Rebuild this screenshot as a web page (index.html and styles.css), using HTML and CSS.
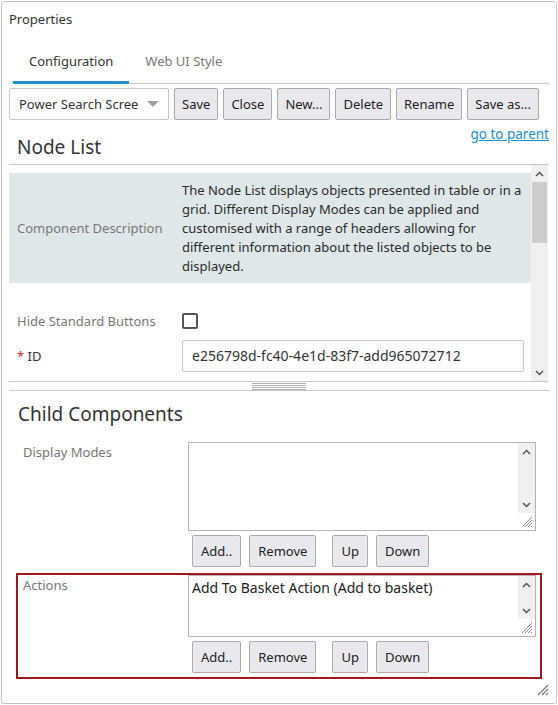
FILE: index.html
```html
<!DOCTYPE html>
<html>
<head>
<meta charset="utf-8">
<link rel="stylesheet" href="styles.css">
</head>
<body>
<div class="panel">
  <div class="panel-title">Properties</div>
  <div class="tabs">
    <div class="tab active">Configuration</div>
    <div class="tab">Web UI Style</div>
  </div>
  <div class="toolbar">
    <div class="select"><span class="select-text">Power Search Scree</span><span class="caret"></span></div>
    <button class="btn">Save</button>
    <button class="btn">Close</button>
    <button class="btn">New...</button>
    <button class="btn">Delete</button>
    <button class="btn">Rename</button>
    <button class="btn">Save as...</button>
  </div>
  <div class="node-head">
    <h2 class="heading">Node List</h2>
    <a class="parent-link" href="#">go to parent</a>
  </div>
  <div class="scroll-area">
    <div class="scroll-content">
      <div class="desc-row">
        <div class="desc-label">Component Description</div>
        <div class="desc-text">The Node List displays objects presented in table or in a grid. Different Display Modes can be applied and customised with a range of headers allowing for different information about the listed objects to be displayed.</div>
      </div>
      <div class="field-row hide-row">
        <div class="field-label">Hide Standard Buttons</div>
        <div class="checkbox"></div>
      </div>
      <div class="field-row id-row">
        <div class="field-label dark"><span class="req">*</span> ID</div>
        <div class="input">e256798d-fc40-4e1d-83f7-add965072712</div>
      </div>
    </div>
    <div class="vscroll">
      <div class="arrow up"><svg width="9" height="6" viewBox="0 0 9 6"><polyline points="1,5 4.5,1.5 8,5" fill="none" stroke="#505050" stroke-width="1.4"/></svg></div>
      <div class="thumb"></div>
      <div class="track"></div>
      <div class="arrow down"><svg width="9" height="6" viewBox="0 0 9 6"><polyline points="1,1 4.5,4.5 8,1" fill="none" stroke="#505050" stroke-width="1.4"/></svg></div>
    </div>
  </div>
  <div class="splitter"><div class="grip"></div></div>
  <h2 class="heading child-heading">Child Components</h2>
  <div class="child-row">
    <div class="child-label">Display Modes</div>
    <div class="child-body">
      <div class="listbox tall">
        <div class="list-text"></div>
        <div class="list-scroll">
          <div class="arrow"><svg width="9" height="6" viewBox="0 0 9 6"><polyline points="1,5 4.5,1.5 8,5" fill="none" stroke="#505050" stroke-width="1.4"/></svg></div>
          <div class="arrow"><svg width="9" height="6" viewBox="0 0 9 6"><polyline points="1,1 4.5,4.5 8,1" fill="none" stroke="#505050" stroke-width="1.4"/></svg></div>
        </div>
        <svg class="resize" width="13" height="13" viewBox="0 0 13 13"><path d="M12 2 L2 12 M12 5 L5 12 M12 8 L8 12 M12 11 L11 12" stroke="#8a8a8a" stroke-width="1"/></svg>
      </div>
      <div class="btn-row">
        <button class="btn sm">Add..</button>
        <button class="btn sm">Remove</button>
        <button class="btn sm gap">Up</button>
        <button class="btn sm">Down</button>
      </div>
    </div>
  </div>
  <div class="child-row selected">
    <div class="child-label">Actions</div>
    <div class="child-body">
      <div class="listbox short">
        <div class="list-text">Add To Basket Action (Add to basket)</div>
        <div class="list-scroll">
          <div class="arrow"><svg width="9" height="6" viewBox="0 0 9 6"><polyline points="1,5 4.5,1.5 8,5" fill="none" stroke="#505050" stroke-width="1.4"/></svg></div>
          <div class="arrow"><svg width="9" height="6" viewBox="0 0 9 6"><polyline points="1,1 4.5,4.5 8,1" fill="none" stroke="#505050" stroke-width="1.4"/></svg></div>
        </div>
        <svg class="resize" width="13" height="13" viewBox="0 0 13 13"><path d="M12 2 L2 12 M12 5 L5 12 M12 8 L8 12 M12 11 L11 12" stroke="#8a8a8a" stroke-width="1"/></svg>
      </div>
      <div class="btn-row">
        <button class="btn sm">Add..</button>
        <button class="btn sm">Remove</button>
        <button class="btn sm gap">Up</button>
        <button class="btn sm">Down</button>
      </div>
    </div>
  </div>
  <svg class="panel-resize" width="12" height="12" viewBox="0 0 12 12"><path d="M11 1 L1 11 M11 5 L5 11 M11 9 L9 11" stroke="#777" stroke-width="1.2"/></svg>
</div>
</body>
</html>
```
FILE: styles.css
```css
* { box-sizing: border-box; }
body {
  margin: 0;
  background: #fff;
  font-family: "Noto Sans", "Open Sans", sans-serif;
  font-size: 13px;
  color: #333;
}
.panel {
  position: relative;
  margin: 1px;
  width: 556px;
  height: 703px;
  border: 1px solid #c3c3c3;
  border-radius: 3px;
}
.panel-title {
  height: 39px;
  line-height: 34px;
  padding-left: 7px;
  color: #333;
}
.tabs {
  display: flex;
  margin: 0 7px 0 11px;
  border-bottom: 1px solid #c8c8c8;
}
.tab {
  padding: 1px 16px 0;
  line-height: 39px;
  border-bottom: 3px solid transparent;
  margin-bottom: -1px;
  color: #777;
}
.tab.active {
  color: #333;
  border-bottom-color: #1f8fd1;
}
.toolbar {
  display: flex;
  gap: 5px;
  margin-top: 4px;
  padding-left: 7px;
}
.select {
  width: 160px;
  height: 32px;
  border: 1px solid #c8c8c8;
  border-radius: 2px;
  display: flex;
  align-items: center;
  justify-content: space-between;
  padding: 0 9px 0 9px;
  color: #333;
}
.caret {
  width: 0;
  height: 0;
  border-left: 6px solid transparent;
  border-right: 6px solid transparent;
  border-top: 6px solid #a0a0a0;
}
.btn {
  font-family: inherit;
  font-size: 13px;
  color: #222;
  height: 32px;
  padding: 0 7px;
  background: #e9e9ed;
  border: 1px solid #ababab;
  border-radius: 2px;
}
.node-head {
  display: flex;
  justify-content: space-between;
  height: 45px;
  margin: 0 7px;
  border-bottom: 1px solid #c8c8c8;
}
.heading {
  margin: 0;
  font-weight: normal;
  font-size: 19px;
  line-height: 26px;
  color: #333;
}
.node-head .heading {
  align-self: flex-end;
  padding: 0 0 4px 8px;
}
.parent-link {
  align-self: flex-start;
  margin-top: 6px;
  line-height: 16px;
  font-size: 13.5px;
  color: #1a8fd0;
}
.scroll-area {
  display: flex;
  margin: 0 8px 0 7px;
  height: 217px;
  border-bottom: 1px solid #c8c8c8;
}
.scroll-content {
  flex: 1;
  overflow: hidden;
  padding-top: 8px;
}
.vscroll {
  width: 17px;
  background: #f0f0f0;
  display: flex;
  flex-direction: column;
}
.vscroll .arrow {
  height: 17px;
  display: flex;
  align-items: center;
  justify-content: center;
}
.vscroll .thumb {
  height: 61px;
  margin: 0 1px;
  background: #cdcdcd;
}
.vscroll .track { flex: 1; }
.desc-row {
  display: grid;
  grid-template-columns: 173px 1fr;
  align-items: center;
  background: #dfe7e9;
}
.desc-label {
  padding-left: 8px;
  color: #777;
}
.desc-text {
  padding: 8px 8px 7px 0;
  line-height: 19px;
  color: #2b2b2b;
}
.field-row {
  display: grid;
  grid-template-columns: 173px 1fr;
  align-items: center;
}
.hide-row {
  margin-top: 21px;
  height: 33px;
}
.id-row {
  margin-top: 3px;
  height: 32px;
}
.field-label {
  padding-left: 8px;
  color: #777;
}
.field-label.dark { color: #333; }
.req { color: #d9262c; }
.checkbox {
  width: 16px;
  height: 16px;
  border: 2px solid #555;
  border-radius: 2px;
}
.input {
  width: 342px;
  height: 32px;
  border: 1px solid #c8c8c8;
  border-radius: 2px;
  padding-left: 9px;
  line-height: 30px;
  font-size: 14px;
  color: #333;
}
.splitter {
  height: 9px;
  margin: 0 7px;
  border-bottom: 1px solid #c8c8c8;
  display: flex;
  justify-content: center;
}
.grip {
  width: 54px;
  height: 7px;
  margin-top: 1px;
  background: repeating-linear-gradient(#b0b0b0 0 1px, transparent 1px 2px);
}
.child-heading {
  margin-top: 10px;
  padding-left: 16px;
  margin-bottom: 13px;
}
.child-row {
  display: grid;
  grid-template-columns: 165px 1fr;
  margin: 0 14px;
  padding: 0 5px 4px 5px;
  border: 2px solid transparent;
}
.child-row.selected { border-color: #a2161f; }
.child-label {
  line-height: 20px;
  color: #777;
}
.listbox {
  position: relative;
  display: flex;
  border: 1px solid #b4b4b4;
  width: 348px;
}
.listbox.tall { height: 89px; }
.listbox.short { height: 62px; }
.list-text {
  flex: 1;
  padding: 2px 3px;
  line-height: 20px;
  font-size: 14px;
  color: #222;
}
.list-scroll {
  width: 17px;
  margin-bottom: 17px;
  background: #f0f0f0;
  display: flex;
  flex-direction: column;
  justify-content: space-between;
}
.list-scroll .arrow {
  height: 17px;
  display: flex;
  align-items: center;
  justify-content: center;
}
.resize {
  position: absolute;
  right: 2px;
  bottom: 2px;
}
.btn-row {
  display: flex;
  margin-top: 4px;
  padding-left: 4px;
}
.btn.sm {
  margin-right: 8px;
  padding: 0 8px;
}
.btn.gap { margin-left: 8px; }
.panel-resize {
  position: absolute;
  right: 7px;
  bottom: 7px;
}
```
